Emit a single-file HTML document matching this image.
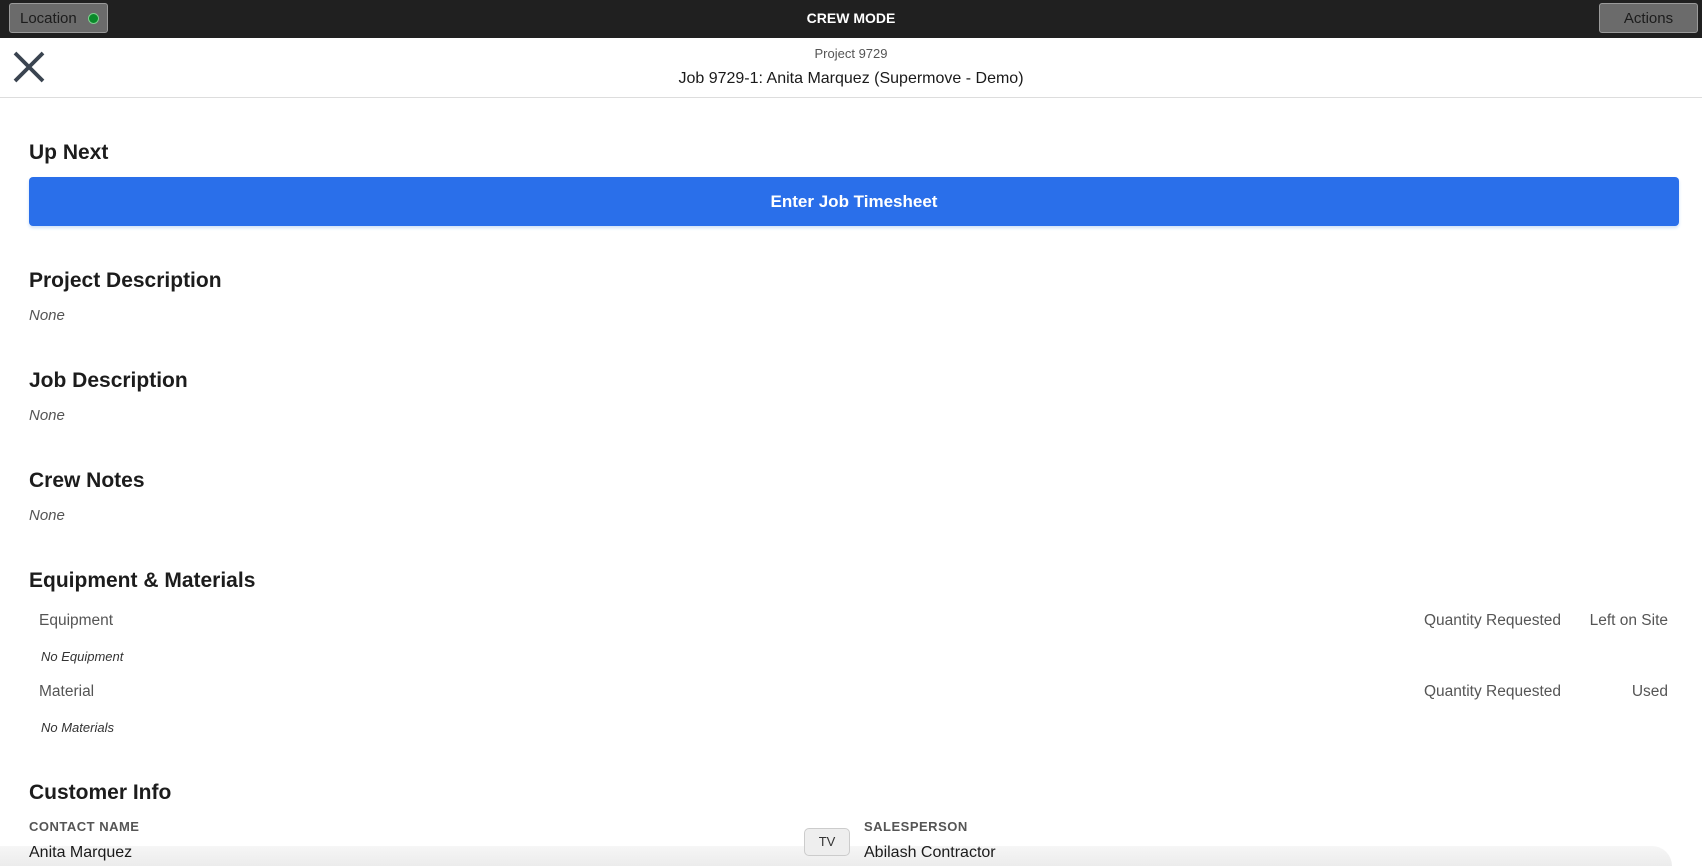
<!DOCTYPE html>
<html><head><meta charset="utf-8"><style>
*{margin:0;padding:0;box-sizing:border-box}
body{width:1702px;height:866px;overflow:hidden;background:#fff;font-family:"Liberation Sans",sans-serif;color:#1a1a1a;position:relative}
.a{position:absolute;white-space:nowrap}
.top{position:absolute;left:0;top:0;width:1702px;height:38px;background:#202020}
.btn{position:absolute;top:3px;height:30px;background:#6b6b6b;border:1px solid #9a9a9a;border-radius:3px;color:#1c1c1c;font-size:15px;line-height:30px}
h2{position:absolute;font-size:21px;font-weight:bold;left:29px;white-space:nowrap;color:#1c1c1c}
.none{position:absolute;left:29px;font-size:15px;font-style:italic;color:#555}
.t{position:absolute;font-size:15.5px;color:#555;white-space:nowrap}
</style></head><body>
<div class="top"></div>
<div class="btn" style="left:9px;width:99px;padding-left:10px">Location<span style="position:absolute;left:78px;top:9px;width:11px;height:11px;border-radius:50%;background:#0a8a2a;border:1px solid #7fd08f"></span></div>
<div class="a" style="left:0;width:1702px;text-align:center;top:10px;color:#fff;font-size:14px;font-weight:bold">CREW MODE</div>
<div class="btn" style="left:1599px;width:99px;text-align:center">Actions</div>
<svg class="a" style="left:13px;top:51px" width="32" height="32" viewBox="0 0 32 32"><path d="M2 2L30 30M30 2L2 30" stroke="#3a4450" stroke-width="3.8"/></svg>
<div class="a" style="left:0;width:1702px;text-align:center;top:46px;font-size:13px;color:#555">Project 9729</div>
<div class="a" style="left:0;width:1702px;text-align:center;top:70px;font-size:16px;color:#1a1a1a">Job 9729-1: Anita Marquez (Supermove - Demo)</div>
<div class="a" style="left:0;top:97px;width:1702px;height:1px;background:#ddd"></div>
<h2 style="top:141px">Up Next</h2>
<div class="a" style="left:29px;top:177px;width:1650px;height:49px;background:#2a6fea;border-radius:4px;box-shadow:0 2px 3px #cfe0f7;color:#fff;font-weight:bold;font-size:17px;text-align:center;line-height:49px">Enter Job Timesheet</div>
<h2 style="top:269px">Project Description</h2><div class="none" style="top:307px">None</div>
<h2 style="top:369px">Job Description</h2><div class="none" style="top:407px">None</div>
<h2 style="top:469px">Crew Notes</h2><div class="none" style="top:507px">None</div>
<h2 style="top:569px">Equipment &amp; Materials</h2>
<div class="t" style="left:39px;top:612px">Equipment</div>
<div class="t" style="left:1424px;top:612px">Quantity Requested</div>
<div class="t" style="right:34px;top:612px">Left on Site</div>
<div class="t" style="left:41px;top:649px;font-size:13px;font-style:italic;color:#333">No Equipment</div>
<div class="t" style="left:39px;top:683px">Material</div>
<div class="t" style="left:1424px;top:683px">Quantity Requested</div>
<div class="t" style="right:34px;top:683px">Used</div>
<div class="t" style="left:41px;top:720px;font-size:13px;font-style:italic;color:#333">No Materials</div>
<h2 style="top:781px">Customer Info</h2>
<div class="a" style="left:0;top:846px;width:1672px;height:20px;background:linear-gradient(#f6f6f6,#ececec);border-top-right-radius:30px"></div>
<div class="t" style="left:29px;top:819px;font-size:13px;font-weight:bold;color:#555;letter-spacing:.5px">CONTACT NAME</div>
<div class="t" style="left:864px;top:819px;font-size:13px;font-weight:bold;color:#555;letter-spacing:.5px">SALESPERSON</div>
<div class="t" style="left:29px;top:844px;font-size:16px;color:#1a1a1a">Anita Marquez</div>
<div class="t" style="left:864px;top:844px;font-size:16px;color:#1a1a1a">Abilash Contractor</div>
<div class="a" style="left:804px;top:828px;width:46px;height:28px;background:#eee;border:1px solid #ccc;border-radius:5px;font-size:13px;text-align:center;line-height:26px;color:#333">TV</div>
</body></html>
